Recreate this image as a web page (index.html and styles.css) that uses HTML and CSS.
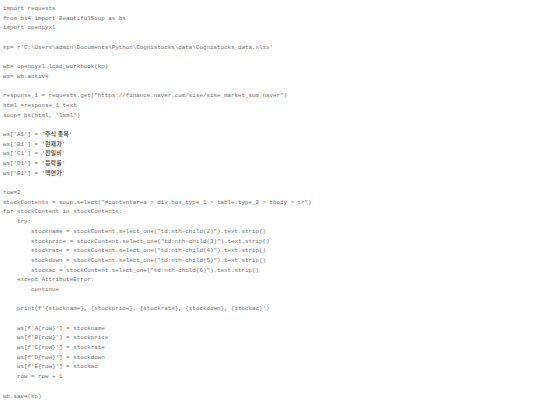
FILE: index.html
```html
<!DOCTYPE html>
<html lang="ko">
<head>
<meta charset="utf-8">
<title>code</title>
<link rel="stylesheet" href="styles.css">
</head>
<body>
<div class="code">
<div class="ln">import requests</div>
<div class="ln">from bs4 import BeautifulSoup as bs</div>
<div class="ln">import openpyxl</div>
<div class="ln"></div>
<div class="ln">kp= r'C:\Users\admin\Documents\Python\Cognistocks\data\Cognistocks_data.xlsx'</div>
<div class="ln"></div>
<div class="ln">wb= openpyxl.load_workbook(kp)</div>
<div class="ln">ws= wb.active</div>
<div class="ln"></div>
<div class="ln">response_1 = requests.get("https://finance.naver.com/sise/sise_market_sum.naver")</div>
<div class="ln">html =response_1.text</div>
<div class="ln">soup= bs(html, 'lxml')</div>
<div class="ln"></div>
<div class="ln">ws['A1'] = '<span class="ko">주식 종목</span>'</div>
<div class="ln">ws['B1'] = '<span class="ko">현재가</span>'</div>
<div class="ln">ws['C1'] = '<span class="ko">전일비</span>'</div>
<div class="ln">ws['D1'] = '<span class="ko">등락률</span>'</div>
<div class="ln">ws['E1'] = '<span class="ko">액면가</span>'</div>
<div class="ln"></div>
<div class="ln">row=2</div>
<div class="ln">stockContents = soup.select("#contentarea &gt; div.box_type_1 &gt; table.type_2 &gt; tbody &gt; tr")</div>
<div class="ln">for stockContent in stockContents:</div>
<div class="ln">    try:</div>
<div class="ln">        stockname = stockContent.select_one("td:nth-child(2)").text.strip()</div>
<div class="ln">        stockprice = stockContent.select_one("td:nth-child(3)").text.strip()</div>
<div class="ln">        stockrate = stockContent.select_one("td:nth-child(4)").text.strip()</div>
<div class="ln">        stockdown = stockContent.select_one("td:nth-child(5)").text.strip()</div>
<div class="ln">        stockac = stockContent.select_one("td:nth-child(6)").text.strip()</div>
<div class="ln">    except AttributeError:</div>
<div class="ln">        continue</div>
<div class="ln"></div>
<div class="ln">    print(f'{stockname}, {stockprice}, {stockrate}, {stockdown}, {stockac}')</div>
<div class="ln"></div>
<div class="ln">    ws[f'A{row}'] = stockname</div>
<div class="ln">    ws[f'B{row}'] = stockprice</div>
<div class="ln">    ws[f'C{row}'] = stockrate</div>
<div class="ln">    ws[f'D{row}'] = stockdown</div>
<div class="ln">    ws[f'E{row}'] = stockac</div>
<div class="ln">    row = row + 1</div>
<div class="ln"></div>
<div class="ln">wb.save(kp)</div>
</div>
</body>
</html>
```
FILE: styles.css
```css
html, body {
  margin: 0;
  padding: 0;
  background: #ffffff;
}

.code {
  display: flex;
  flex-direction: column;
  padding: 4px 0 0 3px;
  font-family: "Liberation Mono", "DejaVu Sans Mono", monospace;
  font-size: 5.85px;
  color: #6e6e6e;
}

.ln {
  height: 9.7px;
  line-height: 9.7px;
  white-space: pre;
}

.ko {
  font-family: "Noto Sans CJK KR", sans-serif;
  font-size: 6px;
  line-height: 6px;
  color: #333333;
  font-weight: 500;
}
```
